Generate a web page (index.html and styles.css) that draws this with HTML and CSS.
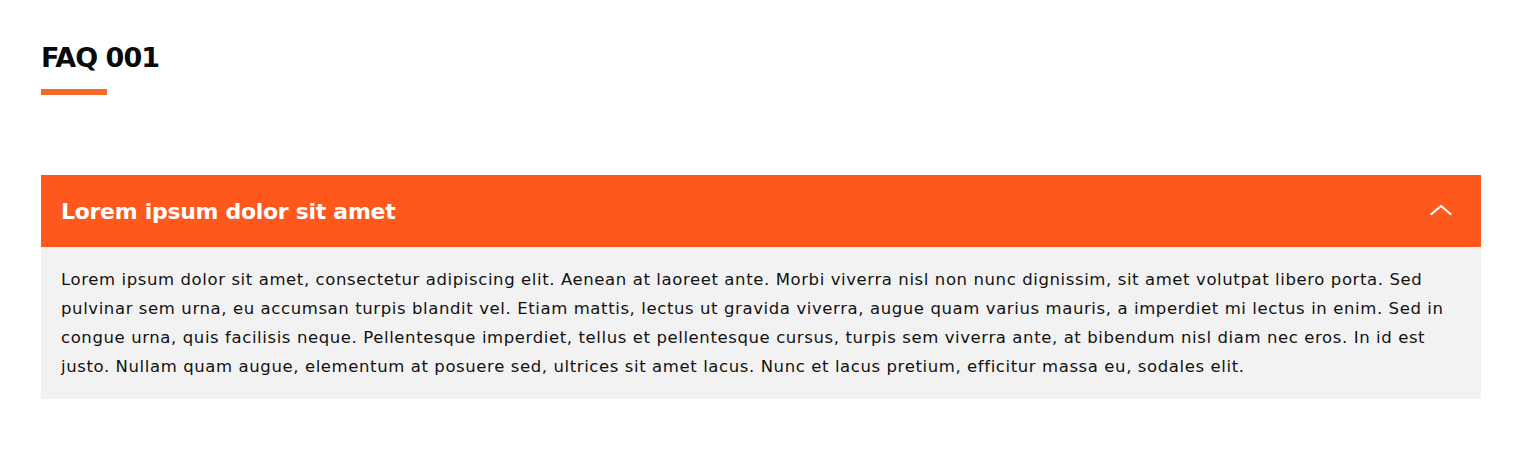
FILE: index.html
```html
<!DOCTYPE html>
<html lang="en">
<head>
<meta charset="utf-8">
<title>FAQ 001</title>
<link rel="stylesheet" href="styles.css">
</head>
<body>
<main class="page">
  <header class="section-head">
    <h1 class="section-title">FAQ 001</h1>
    <span class="section-rule"></span>
  </header>
  <section class="faq">
    <div class="faq-item">
      <button class="faq-question" type="button">
        <span class="faq-question-text">Lorem ipsum dolor sit amet</span>
        <svg class="faq-chevron" width="22" height="12" viewBox="0 0 22 12" aria-hidden="true"><polyline points="1.5,10 11,2 20.5,10" fill="none" stroke="#fff" stroke-width="2.2" stroke-linecap="round" stroke-linejoin="round"/></svg>
      </button>
      <div class="faq-answer">
        <p>Lorem ipsum dolor sit amet, consectetur adipiscing elit. Aenean at laoreet ante. Morbi viverra nisl non nunc dignissim, sit amet volutpat libero porta. Sed pulvinar sem urna, eu accumsan turpis blandit vel. Etiam mattis, lectus ut gravida viverra, augue quam varius mauris, a imperdiet mi lectus in enim. Sed in congue urna, quis facilisis neque. Pellentesque imperdiet, tellus et pellentesque cursus, turpis sem viverra ante, at bibendum nisl diam nec eros. In id est justo. Nullam quam augue, elementum at posuere sed, ultrices sit amet lacus. Nunc et lacus pretium, efficitur massa eu, sodales elit.</p>
      </div>
    </div>
  </section>
</main>
</body>
</html>
```

FILE: styles.css
```css
* { box-sizing: border-box; }
html, body { margin: 0; padding: 0; background: #fff; }
body {
  font-family: "DejaVu Sans", "Noto Sans", sans-serif;
  color: #111;
}
.page {
  padding: 40px 35px 0 41px;
}
.section-head {
  display: flex;
  flex-direction: column;
  align-items: flex-start;
}
.section-title {
  margin: 0;
  font-size: 27px;
  line-height: 36px;
  font-weight: 700;
  letter-spacing: -1px;
  color: #0a0a0a;
}
.section-rule {
  display: block;
  width: 66px;
  height: 6px;
  margin-top: 13px;
  background: #f26b2b;
}
.faq {
  margin-top: 80px;
}
.faq-item {
  width: 1440px;
}
.faq-question {
  display: flex;
  width: 100%;
  height: 72px;
  align-items: center;
  justify-content: space-between;
  padding: 0 29px 0 20px;
  border: 0;
  background: #fe581d;
  color: #fff;
  font-family: inherit;
  cursor: pointer;
}
.faq-question-text {
  font-size: 22px;
  font-weight: 700;
  letter-spacing: -0.3px;
}
.faq-chevron {
  display: block;
  margin-bottom: 2px;
}
.faq-answer {
  background: #f2f2f2;
  padding: 18px 20px 18px;
}
.faq-answer p {
  margin: 0;
  font-size: 16.5px;
  line-height: 29px;
  color: #111;
  letter-spacing: 0.6px;
}
```
